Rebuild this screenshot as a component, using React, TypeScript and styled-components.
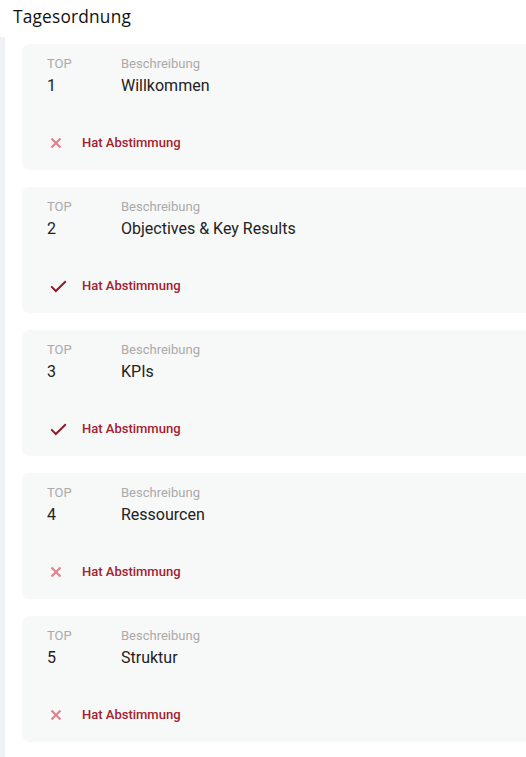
import React from "react";
import styled, { createGlobalStyle } from "styled-components";

const Global = createGlobalStyle`
  html, body { margin: 0; padding: 0; background: #ffffff; }
  body { font-family: Roboto, "Liberation Sans", sans-serif; overflow: hidden; }
`;

const Page = styled.div`
  width: 526px;
  height: 757px;
  display: flex;
  flex-direction: column;
  overflow: hidden;
`;

const Title = styled.h2`
  margin: 0;
  height: 37px;
  box-sizing: border-box;
  padding: 5px 0 0 13px;
  font-family: "Open Sans", "Noto Sans", sans-serif;
  font-weight: 400;
  font-size: 17.3px;
  line-height: 24px;
  color: #111111;
  letter-spacing: 0.2px;
`;

const Body = styled.div`
  flex: 1;
  display: flex;
`;

const Strip = styled.div`
  width: 5px;
  background: #f0f1f4;
  flex: none;
`;

const List = styled.div`
  flex: 1;
  display: flex;
  flex-direction: column;
  gap: 17px;
  padding: 7px 0 0 17px;
  margin-right: -20px;
`;

const Card = styled.div`
  background: #f7f8f8;
  border-radius: 7px;
  padding: 10px 25px 17px;
  height: 126px;
  box-sizing: border-box;
  display: flex;
  flex-direction: column;
`;

const Fields = styled.div`
  display: flex;
`;

const Field = styled.div<{ $w?: number }>`
  display: flex;
  flex-direction: column;
  width: ${(p) => (p.$w ? `${p.$w}px` : "auto")};
`;

const Label = styled.span`
  font-size: 13px;
  line-height: 19px;
  color: #aaaaaa;
`;

const Value = styled.span`
  font-size: 16px;
  line-height: 24px;
  margin-top: 1px;
  color: #222222;
`;

const Status = styled.div`
  margin-top: auto;
  display: flex;
  align-items: center;
  height: 20px;
`;

const IconBox = styled.span`
  width: 35px;
  padding-left: 3px;
  box-sizing: border-box;
  display: flex;
  align-items: center;
`;

const StatusText = styled.span`
  font-size: 13px;
  font-weight: 500;
  color: #a12230;
  line-height: 20px;
`;

const Cross = () => (
  <svg width="12" height="12" viewBox="0 0 12 12">
    <path d="M1.5 1.5 L10.5 10.5 M10.5 1.5 L1.5 10.5" stroke="#e0838b" strokeWidth="2.2" strokeLinecap="butt" />
  </svg>
);

const Check = () => (
  <svg width="17" height="13" viewBox="0 0 17 13">
    <path d="M1.2 6.4 L5.8 11 L15.8 1.2" stroke="#8e1a26" strokeWidth="2" fill="none" />
  </svg>
);

const items = [
  { top: "1", desc: "Willkommen", vote: false },
  { top: "2", desc: "Objectives & Key Results", vote: true },
  { top: "3", desc: "KPIs", vote: true },
  { top: "4", desc: "Ressourcen", vote: false },
  { top: "5", desc: "Struktur", vote: false },
];

export default function App() {
  return (
    <Page>
      <Global />
      <Title>Tagesordnung</Title>
      <Body>
        <Strip />
        <List>
          {items.map((it) => (
            <Card key={it.top}>
              <Fields>
                <Field $w={74}>
                  <Label>TOP</Label>
                  <Value>{it.top}</Value>
                </Field>
                <Field>
                  <Label>Beschreibung</Label>
                  <Value>{it.desc}</Value>
                </Field>
              </Fields>
              <Status>
                <IconBox>{it.vote ? <Check /> : <Cross />}</IconBox>
                <StatusText>Hat Abstimmung</StatusText>
              </Status>
            </Card>
          ))}
        </List>
      </Body>
    </Page>
  );
}
